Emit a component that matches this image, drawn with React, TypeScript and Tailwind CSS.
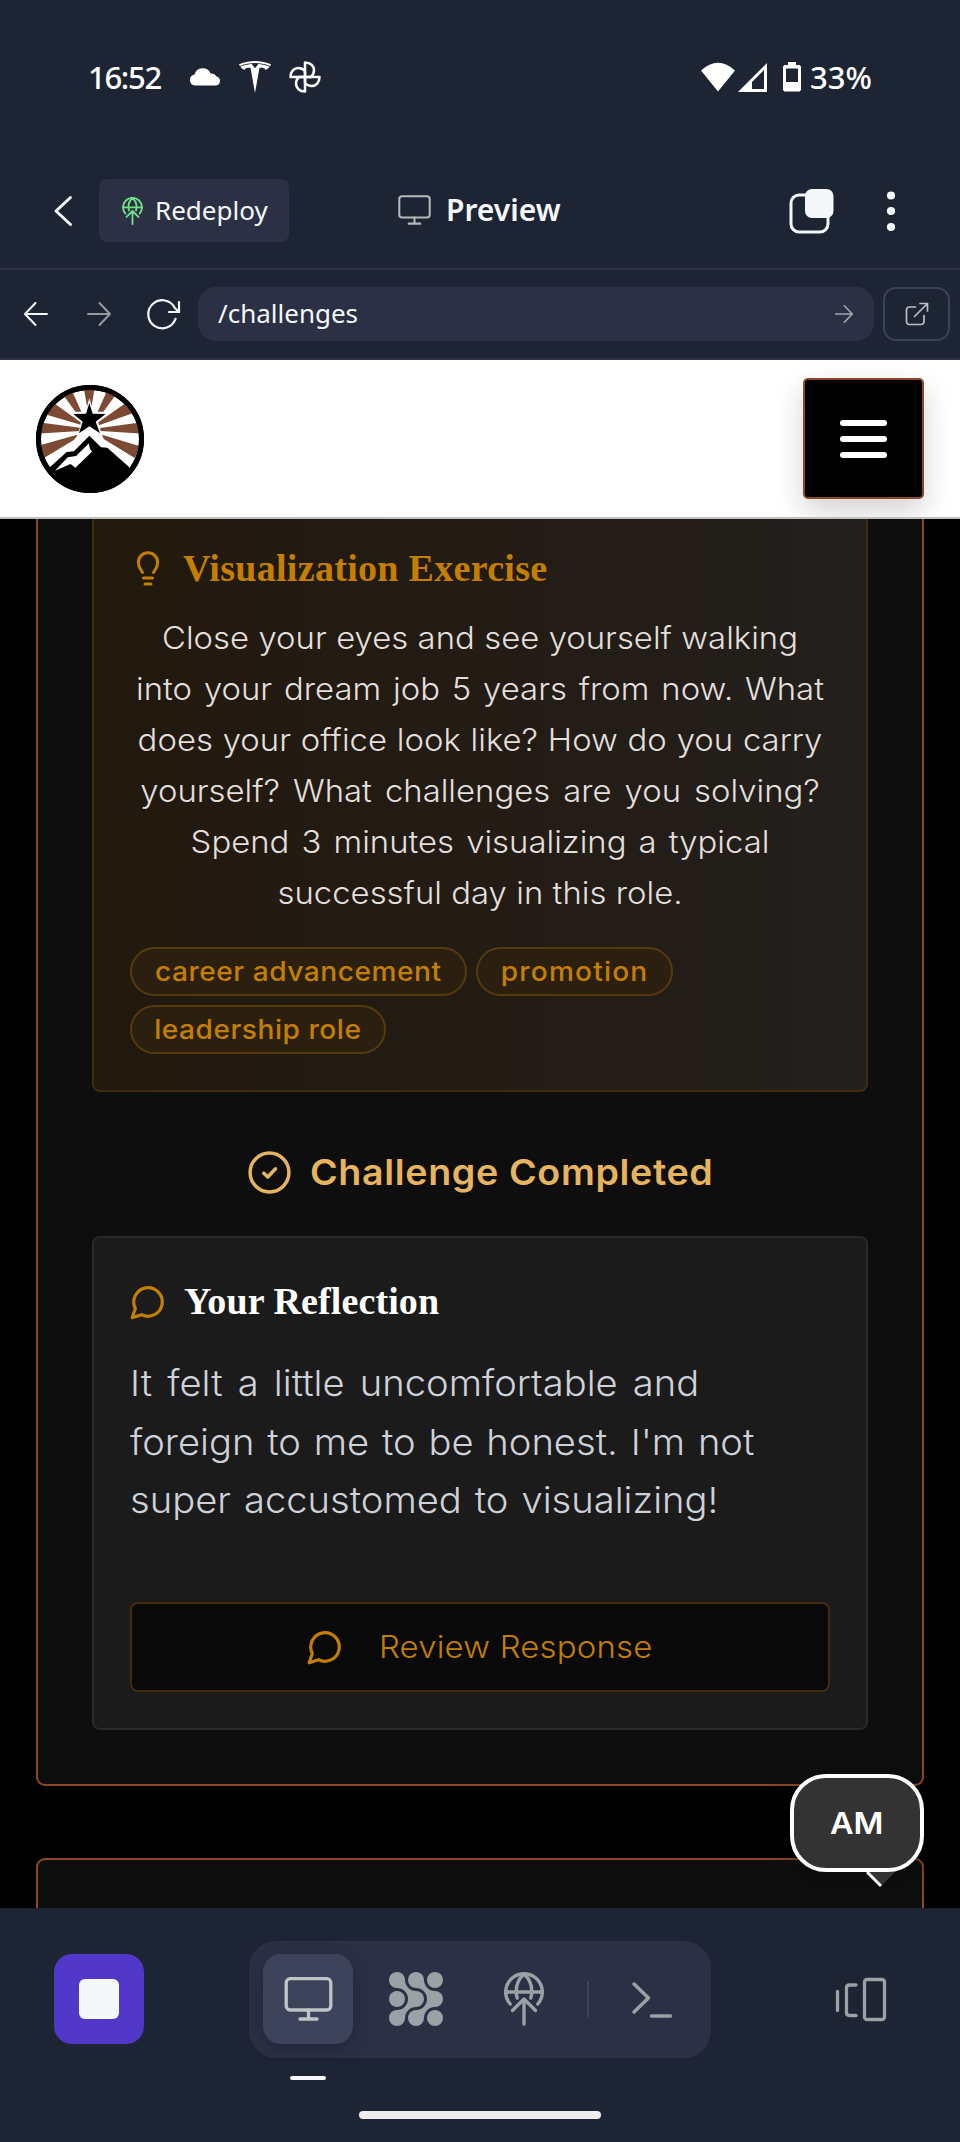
import type { ReactNode } from "react";
import { SiTesla } from "react-icons/si";

function Monitor({ className, stroke = 2 }: { className: string; stroke?: number }) {
  return (
    <svg className={className} viewBox="0 0 48 44" fill="none" stroke="currentColor" strokeWidth={stroke} strokeLinecap="round" strokeLinejoin="round">
      <rect x="1.7" y="1.7" width="44.6" height="31.3" rx="4" />
      <path d="M24 33v9M15.5 42h17" />
    </svg>
  );
}

function DeployGlobe({ className, stroke = 3.4 }: { className: string; stroke?: number }) {
  return (
    <svg className={className} viewBox="0 0 40 54" fill="none" stroke="currentColor" strokeWidth={stroke} strokeLinecap="round" strokeLinejoin="round">
      <path d="M6.2 32A18.3 18.3 0 1 1 33.8 32" />
      <path d="M2 20h36M13.2 26c-2-8-1-17 6.8-24 7.800 7 8.800 16 6.800 24" />
      <path d="M20 52V27M8.500 38.500 20 27l11.500 11.500" />
    </svg>
  );
}

function NodeGrid() {
  const dots = [8, 27, 46];
  return (
    <svg className="size-[54px]" viewBox="0 0 54 54" fill="currentColor">
      {dots.map((x) => dots.map((y) => <circle key={`${x}-${y}`} cx={x} cy={y} r="8" />))}
      {[0, 19].map((dx) => (
        <g key={dx} transform={`translate(${dx} 0)`}>
          <path d="M16 8A11 11 0 0 0 27 19L19 27A11 11 0 0 0 8 16Z" />
          <path d="M16 46A11 11 0 0 1 27 35L19 27A11 11 0 0 1 8 38Z" />
        </g>
      ))}
    </svg>
  );
}

function Bubble({ className }: { className: string }) {
  return (
    <svg className={className} viewBox="0 0 24 24" fill="none" stroke="currentColor" strokeWidth="2" strokeLinecap="round" strokeLinejoin="round">
      <path d="M7.900 20A9 9 0 1 0 4 16.100L2 22Z" />
    </svg>
  );
}

function Pinwheel() {
  return (
    <svg className="size-8" viewBox="0 0 32 32" fill="none" stroke="currentColor" strokeWidth="2.500" strokeLinejoin="round">
      {["", "rotate(90 16 16)", "rotate(180 16 16)", "rotate(270 16 16)"].map((t) => (
        <path key={t} transform={t} d="M16 16V1.500C21.500 1.500 25 5 25 9.300c0 3-1.200 5-3 6.700Z" />
      ))}
    </svg>
  );
}

function Logo() {
  return (
    <svg className="size-[108px]" viewBox="108 105 324 324">
      <defs>
        <clipPath id="disc"><circle cx="270" cy="267" r="150" /></clipPath>
      </defs>
      <circle cx="270" cy="267" r="162" fill="#000" />
      <circle cx="270" cy="267" r="147" fill="#fff" />
      <g clipPath="url(#disc)">
        <g fill="#7d4a33">
          <path d="M251 112H284L275 168H261Z" />
          <path d="M188 132 216 122 244 185H226Z" />
          <path d="M140 194 162 160 242 217V224Z" />
          <path d="M116 251V217L240 233V243Z" />
          <path d="M116 287 133 323 228 266 232 254Z" />
          <path d="M321 122 349 132 310 185H293Z" />
          <path d="M376 160 398 190 297 226 295 217Z" />
          <path d="M422 217V251L302 243 300 234Z" />
          <path d="M422 289 404 324 311 267 306 254Z" />
        </g>
        <path d="M268 145 281 187H324L291 215 304 256 268 236 233 256 245 215 213 187H256Z" fill="#fff" />
        <path d="M268 159 278 191 317 192 287 215 300 250 268 229 237 250 248 215 220 192 258 191Z" fill="#000" />
        <path d="M146 354 230 260 268 231 308 264 392 354Z" fill="#fff" />
        <path d="M148 353 200 306 222 304 268 257 303 292 322 293 388 352V440H140Z" fill="#000" />
        <path d="M165 362 203 322 228 318 267 280 269 294 276 305 226 353 212 342Z" fill="#fff" />
      </g>
      <circle cx="270" cy="267" r="154.500" fill="none" stroke="#000" strokeWidth="15" />
    </svg>
  );
}

function StatusBar() {
  return (
    <div className="flex h-[153px] items-start justify-between pt-[59px] pr-[87px] pl-[88px] font-['Noto_Sans',sans-serif] font-medium text-white">
      <div className="flex h-9 items-center">
        <span className="w-[74px] text-[31px] leading-9 tracking-[-1.300px] whitespace-nowrap">16:52</span>
        <svg className="ml-[27px] h-[18px] w-8" viewBox="0 0 32 18" fill="currentColor">
          <path d="M6 17.500a5.500 5.500 0 0 1-.5-10.900A8.500 8.500 0 0 1 21.600 5.500 6.200 6.200 0 0 1 27.500 8.500 4.600 4.600 0 0 1 27 17.500Z" />
        </svg>
        <SiTesla className="ml-[18px] size-8" />
        <span className="ml-[18px]"><Pinwheel /></span>
      </div>
      <div className="flex h-9 items-center">
        <svg className="h-[30px] w-[34px]" viewBox="0 0 34 30" fill="currentColor"><path d="M0 8.500Q17-7 34 8.500L17 29.500Z" /></svg>
        <svg className="ml-[3px] h-[30px] w-[29px]" viewBox="0 0 29 30" fill="currentColor">
          <path fillRule="evenodd" d="M29 1V30H0ZM26 8 14 20V27H26Z" />
        </svg>
        <svg className="ml-4 h-[30px] w-[18px]" viewBox="0 0 18 30" fill="currentColor">
          <path fillRule="evenodd" d="M5 0H13V3H16.500L18 4.500V28L16.500 29.500H1.500L0 28V4.500L1.500 3H5ZM3 6.500V20H15V6.500Z" />
        </svg>
        <span className="ml-[9px] w-[63px] text-[31px] leading-9 whitespace-nowrap">33%</span>
      </div>
    </div>
  );
}

function TitleBar() {
  return (
    <div className="flex h-[117px] items-start border-b-2 border-[#2c3147] pt-[26px] font-['Noto_Sans',sans-serif] text-[#f4f8fb]">
      <svg className="mt-[16px] ml-[53px] h-8 w-5" viewBox="0 0 20 32" fill="none" stroke="currentColor" strokeWidth="3" strokeLinecap="round" strokeLinejoin="round">
        <path d="M17.500 2.500 3 16 17.500 29.500" />
      </svg>
      <div className="ml-[26px] flex h-[63px] w-[190px] items-center rounded-[8px] bg-[#2b3044] pl-[23px]">
        <DeployGlobe className="h-[28px] w-[21px] text-[#6fe086]" stroke={3.600} />
        <span className="-mt-[2px] ml-[12px] text-[26px] leading-8">Redeploy</span>
      </div>
      <Monitor className="mt-[16px] ml-[109px] h-[30px] w-[33px] text-[#b4b9bc]" stroke={3} />
      <span className="mt-[11px] ml-[15px] w-[116px] text-[30px] leading-10 font-semibold">Preview</span>
      <svg className="mt-[9px] ml-[227px] h-[46px] w-[46px]" viewBox="0 0 46 46">
        <rect x="2" y="7" width="37" height="37" rx="8" fill="none" stroke="currentColor" strokeWidth="3" />
        <rect x="16" y="1" width="28.500" height="29" rx="7" fill="currentColor" />
      </svg>
      <svg className="mt-[11px] ml-[51px] h-[42px] w-[10px]" viewBox="0 0 10 42" fill="currentColor">
        <circle cx="5" cy="5.500" r="4.100" /><circle cx="5" cy="21" r="4.100" /><circle cx="5" cy="37" r="4.100" />
      </svg>
    </div>
  );
}

function Arrow({ className, stroke }: { className: string; stroke: number }) {
  return (
    <svg className={className} viewBox="0 0 24 24" fill="none" stroke="currentColor" strokeWidth={stroke} strokeLinecap="round" strokeLinejoin="round">
      <path d="M1 12H23M12.500 1 23 12 12.500 23" />
    </svg>
  );
}

function AddressBar() {
  return (
    <div className="flex h-[90px] items-center border-b-2 border-[#2c3147] pl-6 text-[#f4f8fb]">
      <Arrow className="size-6 rotate-180" stroke={2} />
      <Arrow className="ml-[39px] size-6 text-[#969b9d]" stroke={2} />
      <svg className="ml-9 h-[31px] w-[34px]" viewBox="0 0 34 31" fill="none" stroke="currentColor" strokeWidth="2.200" strokeLinecap="round" strokeLinejoin="round">
        <path d="M28.500 19.800A14 14 0 1 1 27.800 9L32 13" /><path d="M32 3V13H22" />
      </svg>
      <div className="ml-[17px] flex h-[54px] w-[676px] items-center justify-between rounded-[18px] bg-[#2c3044] pr-[21px] pl-5 font-['Noto_Sans',sans-serif] text-[26px] leading-8">
        <span className="-mt-[2px]">/challenges</span>
        <Arrow className="size-[18px] text-[#a0a4a8]" stroke={2.300} />
      </div>
      <div className="ml-[9px] flex h-[54px] w-[67px] items-center justify-center rounded-[13px] border-2 border-[#3a4159] text-[#bcc1c4]">
        <svg className="size-6" viewBox="0 0 24 24" fill="none" stroke="currentColor" strokeWidth="1.700" strokeLinecap="round" strokeLinejoin="round">
          <path d="M10.500 5H4.500A2.800 2.800 0 0 0 1.500 8V19.500A2.800 2.800 0 0 0 4.500 22.500H16A2.800 2.800 0 0 0 19 19.500V13.500M15 1.500H22.500V9M22.500 1.500 9.500 14.500" />
        </svg>
      </div>
    </div>
  );
}

function SiteHeader() {
  return (
    <div className="relative z-10 flex h-[159px] items-start justify-between overflow-hidden border-b-2 border-[#bfc0bf] bg-white px-9 pt-[18px]">
      <div className="pt-[7px]"><Logo /></div>
      <div className="flex size-[121px] flex-col items-center justify-center gap-[10px] rounded-[5px] border-2 border-[#8b4726] bg-black shadow-[0_12px_30px_rgba(0,0,0,0.18)]">
        <span className="h-[6px] w-[47px] rounded-full bg-white" />
        <span className="h-[6px] w-[47px] rounded-full bg-white" />
        <span className="h-[6px] w-[47px] rounded-full bg-white" />
      </div>
    </div>
  );
}

function Tag({ children, width, tracking }: { children: ReactNode; width: string; tracking: string }) {
  return (
    <span className={`flex h-[49px] items-center justify-center rounded-full border-2 border-[#553a0d] bg-[#2b2010] ${width}`}>
      <span className={`-mt-px block scale-x-106 text-[26.500px] leading-[45px] font-medium whitespace-nowrap text-[#c57f00] ${tracking}`}>{children}</span>
    </span>
  );
}

const exercise: [string, string][] = [
  ["Close your eyes and see yourself walking", "w-[600px]"],
  ["into your dream job 5 years from now. What", "w-[649px]"],
  ["does your office look like? How do you carry", "w-[646px]"],
  ["yourself? What challenges are you solving?", "w-[641px]"],
  ["Spend 3 minutes visualizing a typical", "w-[546px]"],
  ["successful day in this role.", "w-[382px]"],
];

const reflection: [string, string][] = [
  ["It felt a little uncomfortable and", "w-[537px]"],
  ["foreign to me to be honest. I'm not", "w-[589px]"],
  ["super accustomed to visualizing!", "w-[555px]"],
];

function ExerciseCard() {
  return (
    <div className="flex h-[573px] flex-col rounded-b-[8px] border-2 border-t-0 border-[#3f2b0e] bg-linear-to-r from-[#22190d] to-[#231f1c] px-[36px]">
      <div className="mt-[28px] flex h-[44px] items-center text-[#c57f00]">
        <svg className="ml-[6px] h-[36px] w-[24px]" viewBox="0 0 24 36" fill="none" stroke="currentColor" strokeWidth="3" strokeLinecap="round" strokeLinejoin="round">
          <path d="M6.500 21.500C4.800 18.500 2.300 16 2.300 11.500A9.700 9.700 0 0 1 21.700 11.500C21.700 16 19.200 18.500 17.500 21.500M7.500 27H16.500M9 33H15" />
        </svg>
        <h2 className="-mt-[2px] ml-[23px] font-['Liberation_Serif',serif] text-[38px] leading-[44px] font-bold tracking-[0.300px]">Visualization Exercise</h2>
      </div>
      <div className="mt-[21px] flex scale-x-106 flex-col items-center text-[31px] leading-[51px] font-light text-[#e2dfdc]">
        {exercise.map(([text, width]) => (
          <p key={text} className={`whitespace-nowrap [text-align-last:justify] ${width}`}>{text}</p>
        ))}
      </div>
      <div className="mt-[29px] flex flex-wrap gap-[9px]">
        <Tag width="w-[337px]" tracking="tracking-[0.500px]">career advancement</Tag>
        <Tag width="w-[197px]" tracking="tracking-[1.100px]">promotion</Tag>
        <Tag width="w-[256px]" tracking="tracking-[0.500px]">leadership role</Tag>
      </div>
    </div>
  );
}

function ReflectionCard() {
  return (
    <div className="h-[494px] rounded-[8px] border-2 border-[#292929] bg-[#1b1b1b] px-9 pt-[42px]">
      <div className="flex h-[44px] items-center">
        <Bubble className="-ml-px size-[38px] text-[#c57f00]" />
        <h2 className="-mt-[2px] ml-[17px] font-['Liberation_Serif',serif] text-[38px] leading-[44px] font-bold tracking-[0.100px] text-white">Your Reflection</h2>
      </div>
      <div className="mt-[30px] origin-left scale-x-106 text-[36px] leading-[58.500px] font-light text-[#cfd1d8]">
        {reflection.map(([text, width]) => (
          <p key={text} className={`whitespace-nowrap [text-align-last:justify] ${width}`}>{text}</p>
        ))}
      </div>
      <div className="mt-[72px] flex h-[90px] items-center rounded-[8px] border-2 border-[#412b08] bg-[#090909] pl-[174px] text-[#c57f00]">
        <Bubble className="size-[38px]" />
        <span className="ml-[35px] origin-left scale-x-106 text-[31px] leading-10 font-light tracking-[0.200px] whitespace-nowrap">Review Response</span>
      </div>
    </div>
  );
}

function Page() {
  return (
    <div className="relative h-[1389px] overflow-hidden bg-black px-9 font-['Inter',sans-serif]">
      <div className="h-[1267px] rounded-b-[9px] border-2 border-t-0 border-[#8b4726] bg-[#0e0e0e] px-[54px]">
        <ExerciseCard />
        <div className="flex h-[144px] items-center pt-[16px] pl-[156px] text-[#e6b45f]">
          <svg className="size-[43px]" viewBox="0 0 43 43" fill="none" stroke="currentColor" strokeWidth="3.500" strokeLinecap="round" strokeLinejoin="round">
            <circle cx="21.500" cy="21.500" r="19.400" /><path d="M15.800 22.200 19.800 26 27.500 17.800" />
          </svg>
          <span className="mt-px ml-[19px] origin-left scale-x-106 text-[35.500px] leading-[44px] font-semibold tracking-[0.600px] whitespace-nowrap">Challenge Completed</span>
        </div>
        <ReflectionCard />
      </div>
      <div className="mt-[72px] h-[100px] rounded-[9px] border-2 border-[#8b4726] bg-[#0e0e0e]" />
      <div className="absolute top-[1255px] right-9 flex h-[98px] w-[134px] items-center justify-center rounded-[36px] border-4 border-white bg-[#333] text-[30px] font-semibold text-white shadow-[0_8px_24px_rgba(0,0,0,0.3)]">
        <span className="scale-x-108">AM</span>
        <svg className="absolute top-[94px] left-[71px] h-[16px] w-[32px]" viewBox="0 0 32 16">
          <path d="M2 0H30L16 14Z" fill="#333" /><path d="M2 0 16 14" stroke="#f2f2f2" strokeWidth="3" />
        </svg>
      </div>
    </div>
  );
}

function BottomBar() {
  return (
    <div className="relative h-[234px] bg-[#1d2433] text-[#9ca1a5]">
      <div className="flex h-[182px] items-center">
        <div className="ml-[54px] flex size-[90px] items-center justify-center rounded-[18px] bg-[#5138c8]">
          <span className="size-10 rounded-[6px] bg-[#f4f8fb]" />
        </div>
        <div className="ml-[105px] flex h-[117px] w-[462px] items-center rounded-[27px] bg-[#2c3045] pl-[14px]">
          <div className="flex size-[90px] items-center justify-center rounded-[18px] bg-[#3c435a] text-[#bfc4c6] shadow-[0_6px_16px_rgba(20,24,38,0.35)]">
            <Monitor className="h-[44px] w-[49px]" stroke={3.300} />
          </div>
          <span className="ml-9"><NodeGrid /></span>
          <DeployGlobe className="-mt-px ml-[61px] h-[54px] w-10" />
          <span className="ml-[43px] h-9 w-[2px] bg-[#3c435a]" />
          <svg className="ml-[42px] h-[37px] w-[42px]" viewBox="0 0 42 37" fill="none" stroke="currentColor" strokeWidth="3.500" strokeLinecap="round" strokeLinejoin="round">
            <path d="M3 3 17.500 17 3 31M20.500 35H39.500" />
          </svg>
        </div>
        <svg className="ml-[124px] h-[45px] w-[52px]" viewBox="0 0 52 45" fill="none" stroke="currentColor" strokeWidth="3.300" strokeLinecap="round" strokeLinejoin="round">
          <path d="M2.500 14.500V33.500M21 8H14.500Q11.500 8 11.500 11V35.500Q11.500 38.500 14.500 38.500H21" />
          <rect x="29.500" y="2.500" width="20" height="40" rx="2.500" />
        </svg>
      </div>
      <div className="absolute top-[168px] left-[290px] h-1 w-9 rounded-full bg-[#f4f8fb]" />
      <div className="mt-[21px] ml-[359px] h-2 w-[242px] rounded-full bg-[#eeeeef]" />
    </div>
  );
}

export default function App() {
  return (
    <div className="h-[2142px] w-[960px] overflow-hidden bg-[#1d2433]">
      <StatusBar />
      <TitleBar />
      <AddressBar />
      <SiteHeader />
      <Page />
      <BottomBar />
    </div>
  );
}
